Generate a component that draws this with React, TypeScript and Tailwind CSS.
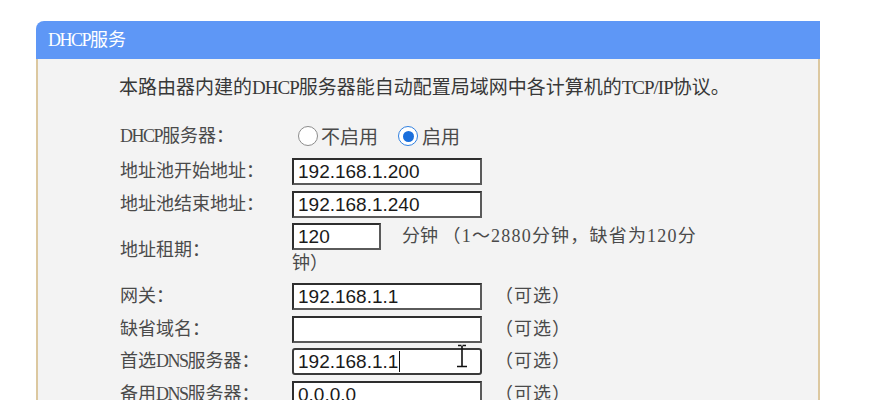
import React from 'react'

const serif = { fontFamily: "'Liberation Serif', 'Noto Sans CJK SC', serif" }
const sans  = { fontFamily: "'Noto Sans CJK SC', 'Noto Sans', sans-serif" }
const arial = { fontFamily: "'Liberation Sans', Arial, sans-serif" }

// SimSun latin is half-width, so squeeze the Latin runs a little
const Lat = ({ children, t = 'tracking-[-1.5px]' }: { children: React.ReactNode; t?: string }) => (
  <span className={t}>{children}</span>
)

function Radio({ checked }: { checked?: boolean }) {
  return checked ? (
    <span className="w-5 h-5 rounded-full border-[1.5px] border-[#2f7fe0] bg-white flex items-center justify-center shrink-0">
      <span className="w-[11px] h-[11px] rounded-full bg-[#1a6fdc]" />
    </span>
  ) : (
    <span className="w-5 h-5 rounded-full border border-[#8c8c8c] bg-white shrink-0" />
  )
}

function TextBox({ value, w = 'w-[190px]', focused, caret }: {
  value?: string; w?: string; focused?: boolean; caret?: boolean
}) {
  return (
    <div
      className={`${w} h-[27px] bg-white border-2 border-[#3a3a3a] flex items-center pl-[4px] text-[19px] text-[#1a1a1a] leading-none
        ${focused ? 'rounded-[3px] border-[#2a2a2a]' : 'border-t-[#2e2e2e] border-l-[#2e2e2e] border-b-[#5a5a5a] border-r-[#5a5a5a]'}`}
      style={arial}
    >
      {value}
      {caret && <span className="ml-[1px] w-[1px] h-[21px] bg-[#111]" />}
    </div>
  )
}

function Row({ label, children, h = 'h-[27px]' }: { label: React.ReactNode; children: React.ReactNode; h?: string }) {
  return (
    <div className={`grid grid-cols-[172px_1fr] ${h}`}>
      <div className="flex items-center text-[18px] text-[#4a4a4a]" style={serif}>{label}</div>
      <div className="flex items-center">{children}</div>
    </div>
  )
}

const Optional = () => (
  <span className="ml-[13px] text-[18px] tracking-[1px] text-[#4a4a4a]" style={serif}>（可选）</span>
)

export default function App() {
  return (
    <div className="w-[870px] h-[400px] bg-white overflow-hidden pt-[21px]">
      <div className="ml-[36px] w-[784px]">
        {/* title bar */}
        <div className="h-[38px] bg-[#5e97f6] rounded-tl-[8px] flex items-center pl-[12px] text-[18px] text-white" style={serif}>
          <Lat>DHCP</Lat>服务
        </div>

        {/* body */}
        <div className="bg-[#f3f3f3] border-l-2 border-r-2 border-[#dcc8a0] pl-[81px] pt-[16px] pb-[40px]">
          <p className="text-[19px] leading-[26px] text-[#383838]" style={serif}>
            本路由器内建的<Lat t="tracking-[-1px]">DHCP</Lat>服务器能自动配置局域网中各计算机的<Lat t="tracking-[-1px]">TCP/IP</Lat>协议。
          </p>

          <div className="mt-[24px] pl-[1px] flex flex-col gap-[5.5px]">
            <div className="grid grid-cols-[172px_1fr] h-[27.5px]">
              <div className="flex items-center h-[22px] text-[18px] text-[#4a4a4a]" style={serif}>
                <Lat>DHCP</Lat>服务器：
              </div>
              <div className="flex items-center h-[22px] pl-[6px] text-[19px] text-[#4a4a4a]" style={sans}>
                <Radio />
                <span className="ml-[3px]">不启用</span>
                <span className="ml-[20px]"><Radio checked /></span>
                <span className="ml-[4px]">启用</span>
              </div>
            </div>

            <Row label="地址池开始地址："><TextBox value="192.168.1.200" /></Row>
            <Row label="地址池结束地址："><TextBox value="192.168.1.240" /></Row>

            <Row label="地址租期：" h="h-[54.5px]">
              <div className="flex flex-col text-[18px] text-[#4a4a4a]" style={serif}>
                <div className="flex items-center h-[27px]">
                  <TextBox value="120" w="w-[89px]" />
                  <span className="ml-[21px]">分钟 <span className="tracking-[1.2px]">（1～2880分钟，缺省为120分</span></span>
                </div>
                <div className="h-[27.5px] flex items-center">钟）</div>
              </div>
            </Row>

            <Row label="网关："><TextBox value="192.168.1.1" /><Optional /></Row>
            <Row label="缺省域名："><TextBox /><Optional /></Row>
            <Row label={<>首选<Lat>DNS</Lat>服务器：</>}>
              <div className="relative">
                <TextBox value="192.168.1.1" focused caret />
                {/* mouse I-beam cursor */}
                <svg className="absolute left-[163px] -top-[4px]" width="14" height="24" viewBox="0 0 14 24">
                  <path d="M3 1.5h3.5M7.5 1.5H11M7 2v20M2 22.5h10" stroke="#111" strokeWidth="1.6" fill="none" />
                </svg>
              </div>
              <Optional />
            </Row>
            <Row label={<>备用<Lat>DNS</Lat>服务器：</>}><TextBox value="0.0.0.0" /><Optional /></Row>
          </div>
        </div>
      </div>
    </div>
  )
}
